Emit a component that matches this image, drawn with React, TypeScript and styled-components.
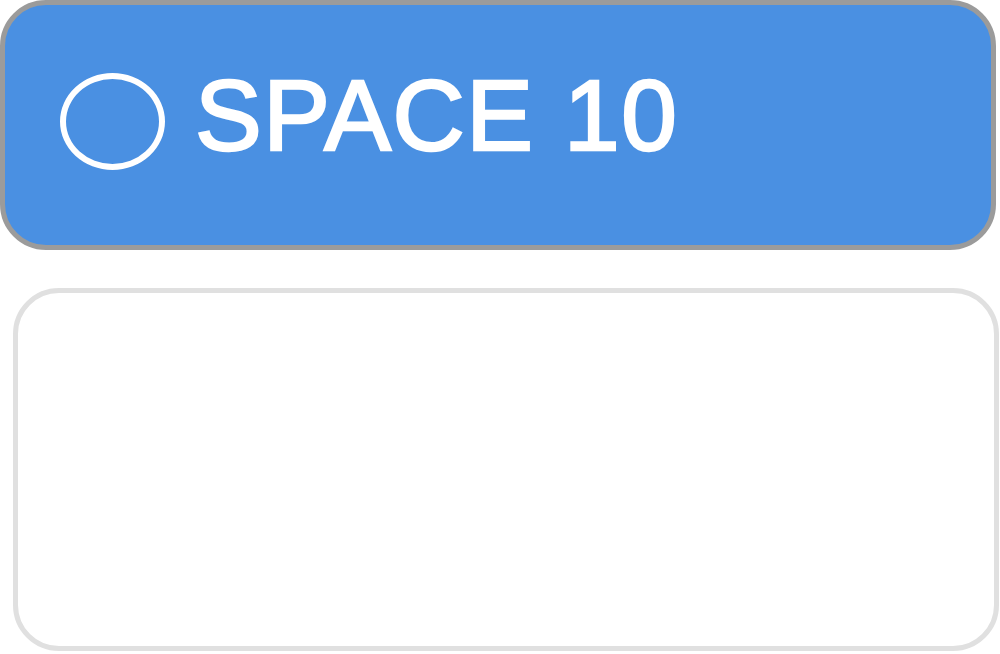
import React from "react";
import styled, { createGlobalStyle } from "styled-components";

const Global = createGlobalStyle`
  html, body { margin: 0; padding: 0; background: #ffffff; }
  body { font-family: "Liberation Sans", Arial, sans-serif; }
`;

const Page = styled.div`
  width: 1000px;
  height: 654px;
  display: flex;
  flex-direction: column;
`;

const Header = styled.div`
  box-sizing: border-box;
  width: 996px;
  height: 250px;
  background: #4a90e2;
  border: 5px solid #9b9b9b;
  border-radius: 46px;
  padding: 0 0 8px 55px;
  display: flex;
  align-items: center;
`;

const Ring = styled.div`
  box-sizing: border-box;
  width: 105px;
  height: 97px;
  border: 6px solid #ffffff;
  border-radius: 50%;
  flex-shrink: 0;
`;

const Title = styled.h1`
  margin: 0 0 13px 30px;
  font-family: "Liberation Sans", Arial, sans-serif;
  font-weight: 400;
  font-size: 100px;
  line-height: 1;
  letter-spacing: 1.6px;
  color: #ffffff;
  -webkit-text-stroke: 2.5px #ffffff;
  white-space: nowrap;
`;

const Panel = styled.div`
  box-sizing: border-box;
  margin: 38px 1px 0 13px;
  height: 363px;
  background: #ffffff;
  border: 5px solid #e0e0e0;
  border-radius: 46px;
`;

export default function App() {
  return (
    <>
      <Global />
      <Page>
        <Header>
          <Ring />
          <Title>SPACE 10</Title>
        </Header>
        <Panel />
      </Page>
    </>
  );
}
